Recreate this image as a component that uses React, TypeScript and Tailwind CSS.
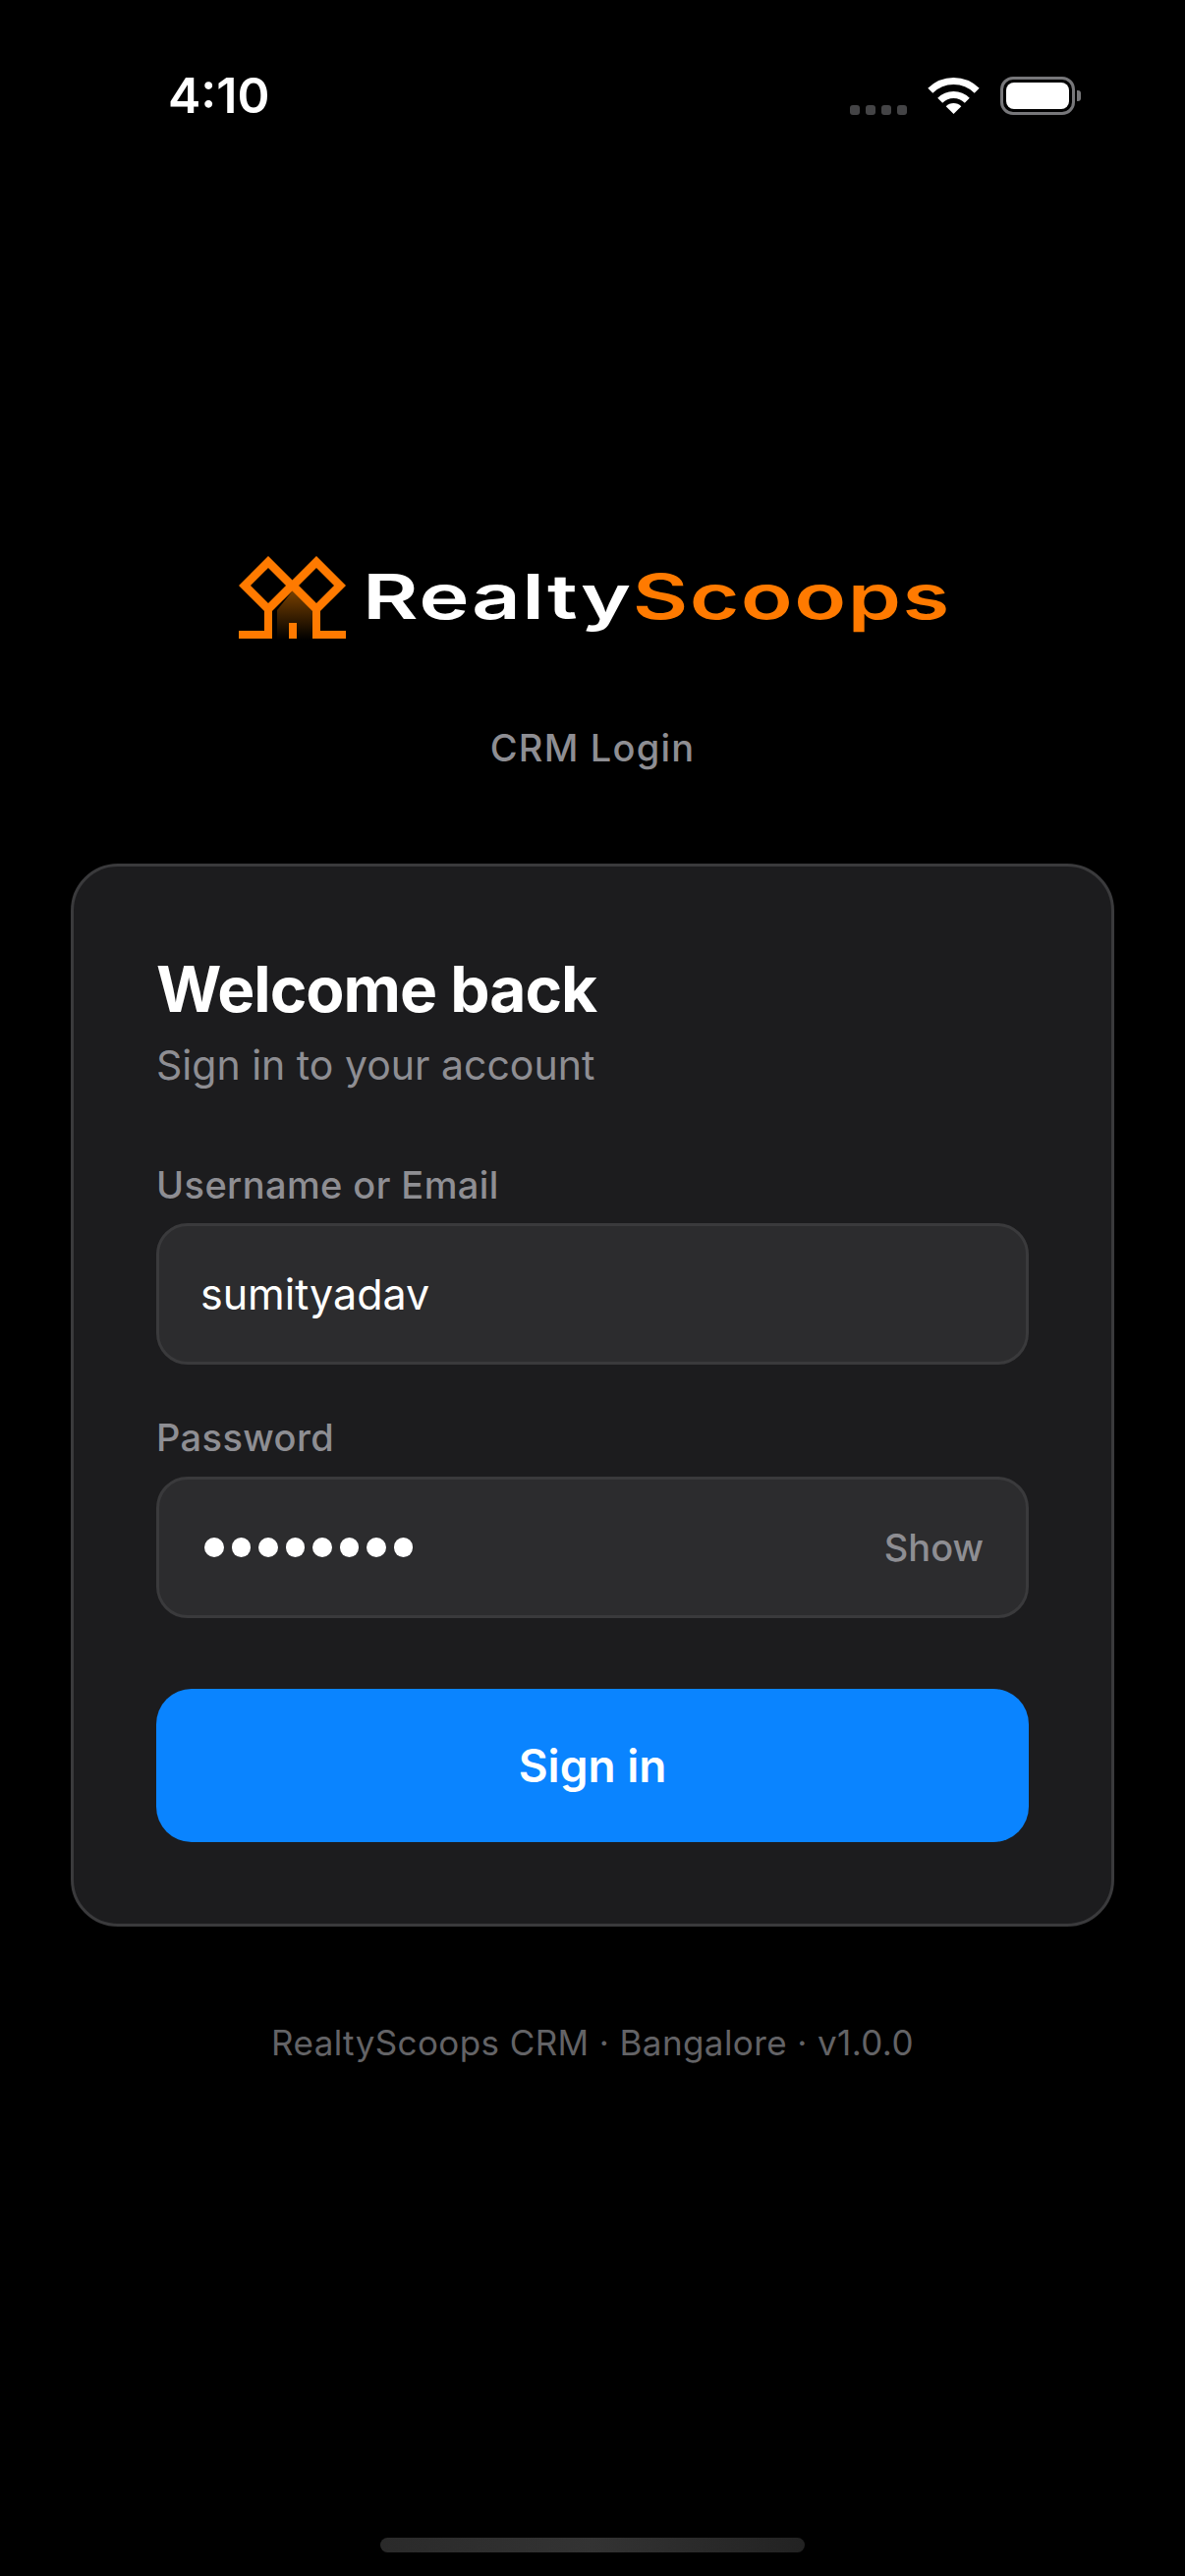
import React from 'react';

const sans = "font-['Inter','Noto_Sans',sans-serif]";

const Logo: React.FC = () => (
  <svg width="110" height="85" viewBox="0 0 110 85" className="shrink-0">
    <defs>
      <linearGradient id="house" x1="0" y1="0" x2="0" y2="1">
        <stop offset="0" stopColor="#7a4100" />
        <stop offset="1" stopColor="#000000" />
      </linearGradient>
    </defs>
    <path d="M55 35 L39 55 L39 85 L75 85 L75 55 Z" fill="url(#house)" />
    <path
      d="M30 6 L6 30 L30 54 L54 30 Z M79 6 L55 30 L79 54 L103 30 Z"
      fill="none"
      stroke="#ff7a00"
      strokeWidth="8.5"
      strokeLinejoin="miter"
    />
    <path
      d="M30 54 L30 80 L0 80 M79 54 L79 80 L109 80"
      fill="none"
      stroke="#ff7a00"
      strokeWidth="8"
    />
    <rect x="51" y="68" width="8" height="16" fill="#ff7a00" />
  </svg>
);

const StatusBar: React.FC = () => (
  <div className="flex items-center justify-between h-[39px] mt-[78px] pl-[171px] pr-[112px]">
    <span className={`${sans} text-[50px] leading-[39px] font-semibold text-white tracking-[0px]`}>4:10</span>
    <div className="flex items-center">
      <div className="flex gap-[6px] mt-[28px] mr-[22px]">
        <div className="w-[10px] h-[10px] rounded-[3px] bg-[#444446]" />
        <div className="w-[10px] h-[10px] rounded-[3px] bg-[#444446]" />
        <div className="w-[10px] h-[10px] rounded-[3px] bg-[#444446]" />
        <div className="w-[10px] h-[10px] rounded-[3px] bg-[#444446]" />
      </div>
      <svg width="51" height="37" viewBox="0 0 51 37" className="mr-[22px] overflow-visible">
        <path d="M1.8 13.3 A33.5 33.5 0 0 1 49.2 13.3" fill="none" stroke="#fff" strokeWidth="7" />
        <path d="M11.7 23.2 A19.5 19.5 0 0 1 39.3 23.2" fill="none" stroke="#fff" strokeWidth="7" />
        <path d="M25.5 37 L17.7 29.2 A11 11 0 0 1 33.3 29.2 Z" fill="#fff" />
      </svg>
      <div className="relative w-[76px] h-[39px] rounded-[13px] border-[3px] border-[#77777a] p-[3px]">
        <div className="w-full h-full rounded-[8px] bg-white" />
        <div className="absolute left-[75px] top-[11px] w-[4px] h-[11px] rounded-r-[3px] bg-[#77777a]" />
      </div>
    </div>
  </div>
);

const Label: React.FC<{ children: React.ReactNode }> = ({ children }) => (
  <div className="text-[38px] leading-[44px] font-medium text-[#8e8e93] tracking-[0.4px]">{children}</div>
);

export default function App() {
  return (
    <div className={`${sans} relative flex flex-col items-center w-[1206px] h-[2622px] bg-black overflow-hidden`}>
      <div className="w-full">
        <StatusBar />
      </div>

      <div className="flex items-center mt-[449px] w-[720px] self-start ml-[243px]">
        <Logo />
        <div className="ml-[16px] mb-[3px] w-[588px] whitespace-nowrap text-[63px] leading-[76px] font-semibold origin-left scale-x-[1.38] tracking-[1.1px]">
          <span className="text-white">Realty</span>
          <span className="text-[#ff7a00]">Scoops</span>
        </div>
      </div>

      <div className="mt-[87px] text-[38px] leading-[46px] text-[#8e8e93] font-medium tracking-[1.2px]">CRM Login</div>

      <div className="mt-[95px] w-[1062px] h-[1082px] rounded-[48px] border-[3px] border-[#3a3a3c] bg-[#1c1c1e] px-[84px] pt-[87px]">
        <h1 className="text-[64px] leading-[76px] font-bold text-white tracking-[-1px]">Welcome back</h1>
        <p className="mt-[13px] text-[41px] leading-[52px] text-[#8e8e93]">Sign in to your account</p>

        <div className="mt-[74px]">
          <Label>Username or Email</Label>
          <div className="mt-[17px] flex items-center h-[144px] rounded-[32px] border-[3px] border-[#3a3a3c] bg-[#2c2c2e] px-[42px] text-[43px] text-white">
            sumityadav
          </div>
        </div>

        <div className="mt-[52px]">
          <Label>Password</Label>
          <div className="mt-[18px] flex items-center justify-between h-[144px] rounded-[32px] border-[3px] border-[#3a3a3c] bg-[#2c2c2e] pl-[46px] pr-[43px]">
            <div className="flex gap-[8px]">
              <div className="w-[19.5px] h-[19.5px] rounded-full bg-white" />
              <div className="w-[19.5px] h-[19.5px] rounded-full bg-white" />
              <div className="w-[19.5px] h-[19.5px] rounded-full bg-white" />
              <div className="w-[19.5px] h-[19.5px] rounded-full bg-white" />
              <div className="w-[19.5px] h-[19.5px] rounded-full bg-white" />
              <div className="w-[19.5px] h-[19.5px] rounded-full bg-white" />
              <div className="w-[19.5px] h-[19.5px] rounded-full bg-white" />
              <div className="w-[19.5px] h-[19.5px] rounded-full bg-white" />
            </div>
            <span className="text-[38px] font-medium text-[#8e8e93]">Show</span>
          </div>
        </div>

        <button className="mt-[72px] w-full h-[156px] rounded-[36px] bg-[#0a84ff] text-[46px] font-semibold text-white">
          Sign in
        </button>
      </div>

      <div className="mt-[96px] text-[35px] leading-[44px] text-[#636366] tracking-[0.4px]">
        RealtyScoops CRM · Bangalore · v1.0.0
      </div>

      <div className="absolute left-[387px] top-[2583px] w-[432px] h-[15px] rounded-full bg-gradient-to-r from-[#2a2a2a] via-[#333333] to-[#222222]" />
    </div>
  );
}
